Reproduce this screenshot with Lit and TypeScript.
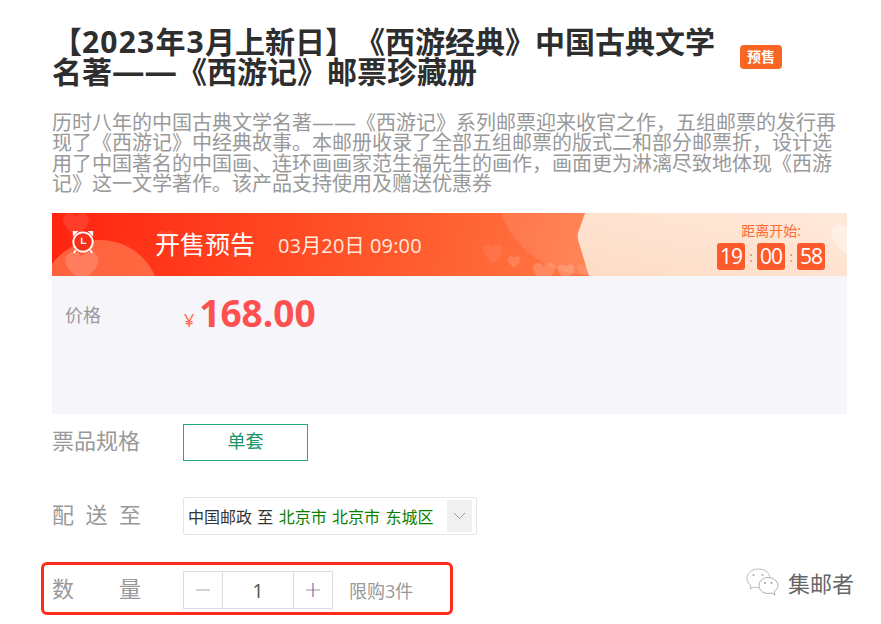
import { LitElement, html, css, svg } from 'lit';
import { customElement, state } from 'lit/decorators.js';

const FONT = css`"Open Sans", "Noto Sans CJK SC", sans-serif`;

// decorative hearts on the banner: [x, y, size, opacity]
const HEARTS = [
  [10, -2, 28, 0.1],
  [105, 16, 18, 0.1],
  [12, 36, 36, 0.16],
  [430, 30, 22, 0.08],
  [455, 42, 14, 0.14],
  [480, 48, 24, 0.16],
  [505, 50, 18, 0.18],
  [525, 50, 14, 0.1],
];

@customElement('app-root')
export class AppRoot extends LitElement {
  static styles = css`
    :host {
      display: block;
      position: relative;
      width: 881px;
      height: 624px;
      overflow: hidden;
      background: #fff;
      font-family: ${FONT};
      color: #333;
      text-spacing-trim: space-all;
    }

    .page {
      display: flex;
      flex-direction: column;
      width: 795px;
      padding-left: 52px;
    }

    .head {
      display: flex;
      align-items: center;
      gap: 25px;
      padding-top: 27px;
    }

    .title {
      width: 663px;
      margin: 0;
      font-size: 30px;
      line-height: 30px;
      font-weight: 700;
      color: #2e2e2e;
    }

    .line {
      display: block;
      white-space: nowrap;
    }

    .title .num {
      letter-spacing: 1.2px;
    }

    .dash {
      display: inline-block;
      transform-origin: left center;
    }

    .title .dash {
      width: 65px;
      transform: scaleX(1.083);
    }

    .desc {
      margin: 26px 0 0;
      font-size: 20px;
      line-height: 20.3px;
      color: #999;
    }

    .desc .dash {
      width: 44px;
      transform: scaleX(1.1);
    }

    .badge {
      width: 42px;
      height: 24px;
      line-height: 23px;
      text-align: center;
      border-radius: 4px;
      background: #f96522;
      color: #fff;
      font-size: 14px;
      font-weight: 700;
    }

    .banner {
      position: relative;
      display: flex;
      align-items: center;
      height: 63px;
      margin-top: 19px;
      overflow: hidden;
      color: #fff;
      background: linear-gradient(100deg, #ff2410 0%, #ff5328 38%, #ff7844 68%, #ff7844 100%);
    }

    .art {
      position: absolute;
      inset: 0;
    }

    .clock {
      position: relative;
      margin: -5px 1px 0 19px;
      width: 24px;
      height: 24px;
    }

    .sale {
      position: relative;
      margin: -3px 0 0 59px;
      font-size: 25px;
    }

    .date {
      position: relative;
      margin-left: 23px;
      font-size: 20px;
      letter-spacing: 0.15px;
      color: #ffe9dc;
    }

    .countdown {
      position: relative;
      align-self: flex-start;
      margin-left: auto;
      margin-right: 22px;
      display: flex;
      flex-direction: column;
      align-items: center;
      gap: 2px;
      padding-top: 8px;
    }

    .countdown-label {
      font-size: 14px;
      line-height: 20px;
      color: #ff6a30;
    }

    .digits {
      display: flex;
      align-items: center;
    }

    .digit {
      width: 28px;
      height: 27px;
      line-height: 27px;
      text-align: center;
      border-radius: 3px;
      background: #ff5a2c;
      color: #fff;
      font-size: 21px;
      letter-spacing: -1px;
    }

    .colon {
      width: 12px;
      text-align: center;
      font-size: 14px;
      color: #c88;
    }

    .price-box {
      display: flex;
      align-items: flex-start;
      height: 138px;
      background: #f5f5fa;
    }

    .price-label {
      width: 132px;
      padding: 27px 0 0 13px;
      box-sizing: border-box;
      font-size: 18px;
      line-height: 24px;
      color: #999;
    }

    .price {
      display: flex;
      align-items: baseline;
      gap: 5px;
      padding-top: 12px;
      color: #ff5050;
    }

    .yen {
      font-size: 18px;
      color: #ff6a4a;
    }

    .amount {
      font-size: 37px;
      line-height: 50px;
      font-weight: 700;
    }

    .row {
      display: flex;
      align-items: center;
    }

    .row-label {
      display: flex;
      justify-content: space-between;
      width: 89px;
      margin: 0 42px 5px 0;
      font-size: 22px;
      line-height: 28px;
      color: #999;
    }

    .spec {
      margin-top: 10px;
    }

    .spec-btn {
      box-sizing: border-box;
      width: 125px;
      height: 37px;
      line-height: 33px;
      text-align: center;
      border: 1px solid #1fae74;
      font-size: 18px;
      color: #1a9468;
    }

    .ship {
      margin-top: 36px;
    }

    .ship-box {
      box-sizing: border-box;
      display: flex;
      align-items: center;
      justify-content: space-between;
      width: 294px;
      height: 38px;
      padding: 0 4px;
      border: 1px solid #e6e6e6;
      border-radius: 2px;
      font-size: 16px;
      word-spacing: 1.2px;
      color: #333;
    }

    .ship-box em {
      font-style: normal;
      color: #0a8000;
    }

    .ship-arrow {
      display: flex;
      align-items: center;
      justify-content: center;
      width: 25px;
      height: 32px;
      background: #f0f0f0;
    }

    .qty {
      margin-top: 36px;
    }

    .stepper {
      box-sizing: border-box;
      display: flex;
      width: 150px;
      height: 38px;
      border: 1px solid #dcdce6;
      font-size: 20px;
      color: #555;
    }

    .stepper div {
      display: flex;
      align-items: center;
      justify-content: center;
    }

    .step {
      width: 38px;
    }

    .count {
      flex: 1;
      border-left: 1px solid #dcdce6;
      border-right: 1px solid #dcdce6;
    }

    .limit {
      margin-left: 16px;
      font-size: 18px;
      color: #999;
    }

    .annotation {
      position: absolute;
      left: 41px;
      top: 562px;
      width: 406px;
      height: 47px;
      border: 3px solid #ff2a1a;
      border-radius: 6px;
    }

    .watermark {
      position: absolute;
      left: 745px;
      top: 568px;
      display: flex;
      align-items: center;
      gap: 8px;
      font-size: 22px;
      line-height: 30px;
      color: #666;
    }
  `;

  @state()
  private time = ['19', '00', '58'];

  private renderHeart(h: number[]) {
    const [x, y, size, opacity] = h;
    return svg`<path
      transform="translate(${x} ${y}) scale(${size / 24})"
      d="M12 22C5 16 1 12 1 7.500C1 4 3.500 2 6.500 2C9 2 11 3.500 12 5.500C13 3.500 15 2 17.500 2C20.500 2 23 4 23 7.500C23 12 19 16 12 22Z"
      fill="#fff"
      opacity="${opacity}"
    />`;
  }

  private renderArt() {
    return html`<svg class="art" viewBox="0 0 795 63">
      <defs>
        <linearGradient id="peach" x1="0" y1="1" x2="1" y2="0">
          <stop offset="0" stop-color="#fedcc5" />
          <stop offset="1" stop-color="#ffe9da" />
        </linearGradient>
      </defs>
      <circle cx="48" cy="87" r="60" fill="#ff8a5c" opacity="0.6" />
      <circle cx="538" cy="-33" r="95" fill="#fff" opacity="0.1" />
      ${HEARTS.map((h) => this.renderHeart(h))}
      <path d="M533 0L526 20Q525 25 527 30L537 63H795V0Z" fill="url(#peach)" />
      ${this.renderHeart([778, 8, 38, 0.4])}
    </svg>`;
  }

  private renderClock() {
    return html`<svg class="clock" viewBox="0 0 26 26">
      <path d="M2 1h6L2 7zM24 1h-6l6 6z" fill="#fff" />
      <circle cx="13" cy="13" r="10.500" fill="#f5301a" stroke="#fff" stroke-width="2" />
      <path d="M11.500 8.500v6h5" fill="none" stroke="#fff" stroke-width="1.600" />
      <path d="M5 22l-2 3M21 22l2 3" stroke="#fff" stroke-width="2" />
    </svg>`;
  }

  render() {
    return html`
      <div class="page">
        <div class="head">
          <h1 class="title">
            <span class="line">【<span class="num">2023年3</span>月上新日】《西游经典》中国古典文学</span>
            <span class="line">名著<span class="dash">——</span>《西游记》邮票珍藏册</span>
          </h1>
          <span class="badge">预售</span>
        </div>
        <p class="desc">
          <span class="line">历时八年的中国古典文学名著<span class="dash">——</span>《西游记》系列邮票迎来收官之作，五组邮票的发行再</span>
          现了《西游记》中经典故事。本邮册收录了全部五组邮票的版式二和部分邮票折，设计选用了中国著名的中国画、连环画画家范生福先生的画作，画面更为淋漓尽致地体现《西游记》这一文学著作。该产品支持使用及赠送优惠券
        </p>

        <div class="banner">
          ${this.renderArt()}
          ${this.renderClock()}
          <span class="sale">开售预告</span>
          <span class="date">03月20日 09:00</span>
          <div class="countdown">
            <span class="countdown-label">距离开始:</span>
            <div class="digits">
              <span class="digit">${this.time[0]}</span>
              <span class="colon">:</span>
              <span class="digit">${this.time[1]}</span>
              <span class="colon">:</span>
              <span class="digit">${this.time[2]}</span>
            </div>
          </div>
        </div>

        <div class="price-box">
          <div class="price-label">价格</div>
          <div class="price">
            <span class="yen">¥</span>
            <span class="amount">168.00</span>
          </div>
        </div>

        <div class="row spec">
          <div class="row-label">票品规格</div>
          <div class="spec-btn">单套</div>
        </div>

        <div class="row ship">
          <div class="row-label"><span>配</span><span>送</span><span>至</span></div>
          <div class="ship-box">
            <span>中国邮政 至 <em>北京市 北京市 东城区</em></span>
            <div class="ship-arrow">
              <svg width="13" height="8" viewBox="0 0 13 8">
                <path d="M1 1l5.500 5.500L12 1" fill="none" stroke="#999" stroke-width="1" />
              </svg>
            </div>
          </div>
        </div>

        <div class="row qty">
          <div class="row-label"><span>数</span><span>量</span></div>
          <div class="stepper">
            <div class="step">
              <svg width="14" height="14" viewBox="0 0 14 14"><path d="M0 7h14" stroke="#c4c4c4" stroke-width="1.500" /></svg>
            </div>
            <div class="count">1</div>
            <div class="step">
              <svg width="14" height="14" viewBox="0 0 14 14">
                <path d="M0 7h14" stroke="#bbb" stroke-width="1.500" />
                <path d="M7 0v14" stroke="#8a3a8a" stroke-width="1" />
              </svg>
            </div>
          </div>
          <span class="limit">限购3件</span>
        </div>
      </div>

      <div class="annotation"></div>

      <div class="watermark">
        <svg width="35" height="30" viewBox="0 0 34 30" fill="none" stroke="#aaa" stroke-width="0.800">
          <path d="M13 1C6.500 1 1.500 5 1.500 10.500C1.500 13.500 3 16 5.500 17.500L4.500 21L8.500 19C10 19.500 11.500 19.700 13 19.700C19.500 19.700 24.500 15.500 24.500 10.500C24.500 5 19.500 1 13 1Z" />
          <path fill="#fff" stroke="#999" d="M22.500 9.500C17.500 9.500 13.500 13 13.500 17.500C13.500 22 17.500 25.500 22.500 25.500C23.800 25.500 25 25.200 26 24.800L29.500 27L28.700 23.500C31 21.800 32.500 19.800 32.500 17.500C32.500 13 27.500 9.500 22.500 9.500Z" />
          <circle cx="8" cy="7" r="1" fill="#aaa" stroke="none" />
          <circle cx="17" cy="7" r="1" fill="#aaa" stroke="none" />
          <circle cx="19.500" cy="15" r="0.900" fill="#999" stroke="none" />
          <circle cx="26" cy="15" r="0.900" fill="#999" stroke="none" />
        </svg>
        <span>集邮者</span>
      </div>
    `;
  }
}
